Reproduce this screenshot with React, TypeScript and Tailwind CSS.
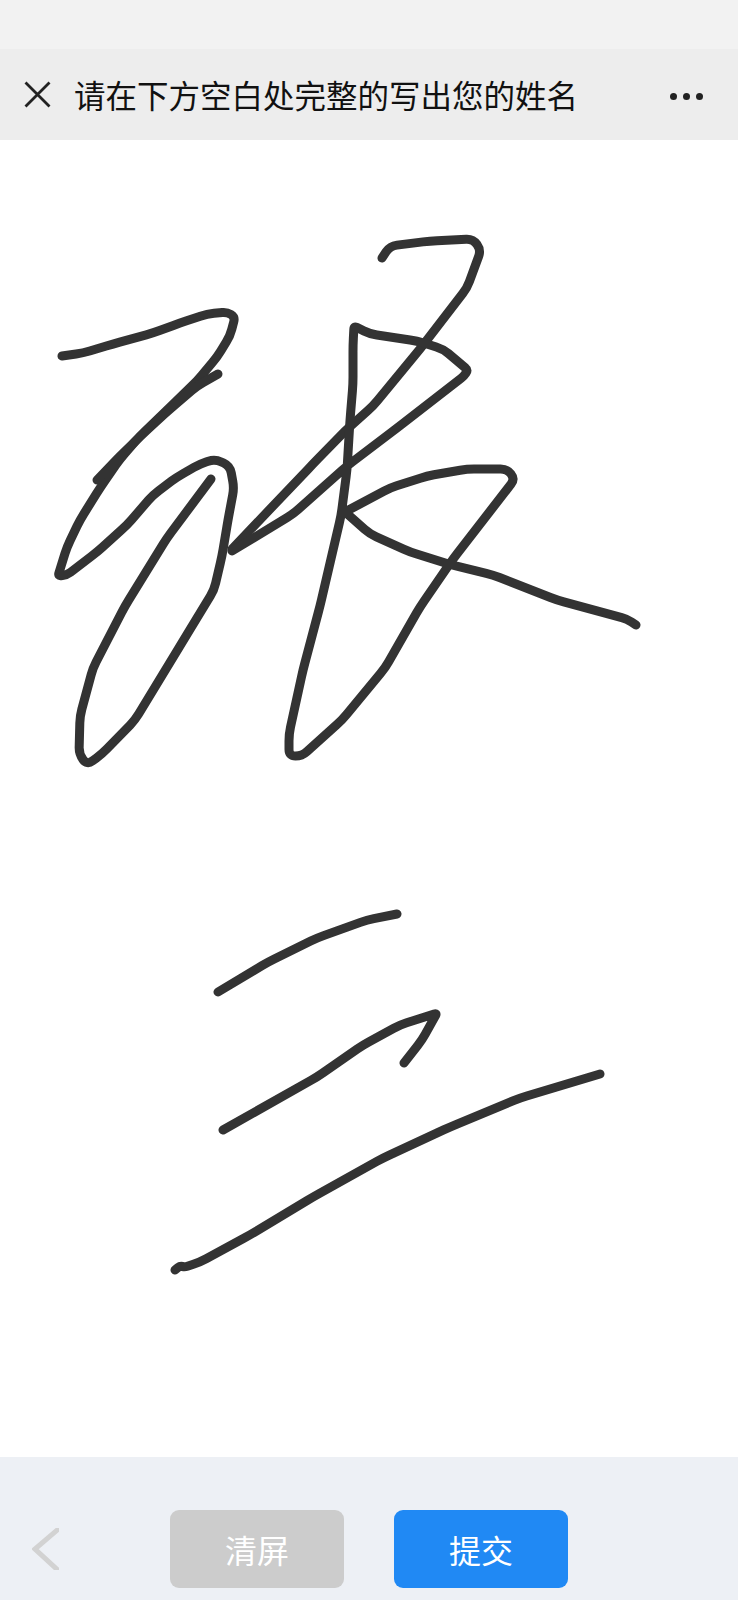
const strokes: number[][][] = [
  [[62,356],[83,353],[113,344],[153,333],[180,323],[207,314],[227,312],[235,317],[230,336],[217,357],[197,381],[170,407],[140,436],[120,459],[100,488],[80,520],[67,547],[58,576],[67,575],[97,552],[127,525],[153,495],[177,477],[200,464],[215,459],[230,466],[234,488],[228,520],[222,556],[214,590],[183,641],[135,720],[102,754],[87,765],[79,754],[80,716],[93,668],[125,606],[167,538],[211,479]],
  [[218,374],[197,386],[170,409],[145,432],[120,456],[97,480]],
  [[232,549],[313,464],[345,431],[373,406],[420,349],[467,288],[481,250],[473,239],[430,241],[390,246],[382,258]],
  [[232,551],[293,514],[347,466],[397,428],[464,376],[468,370],[443,349],[417,341],[370,334],[354,326],[353,345],[353,384],[350,420],[347,470],[341,516],[320,606],[303,670],[289,734],[289,756],[302,756],[342,720],[385,668],[420,607],[453,559],[515,479],[507,469],[467,469],[427,476],[390,488],[345,512],[370,534],[410,552],[452,565],[493,575],[557,600],[627,619],[636,625]],
  [[218,992],[268,962],[317,938],[367,920],[397,914]],
  [[223,1130],[317,1077],[363,1045],[400,1025],[437,1013],[422,1040],[404,1063]],
  [[175,1270],[180,1266],[185,1267],[200,1262],[250,1235],[313,1197],[383,1158],[450,1127],[520,1098],[600,1074]],
];

function rounded(pts: number[][]) {
  let d = `M${pts[0][0]} ${pts[0][1]}`;
  for (let i = 1; i < pts.length - 1; i++) {
    const [px, py] = pts[i - 1];
    const [x, y] = pts[i];
    const [nx, ny] = pts[i + 1];
    const a = Math.hypot(x - px, y - py);
    const b = Math.hypot(nx - x, ny - y);
    const cos = ((x - px) * (nx - x) + (y - py) * (ny - y)) / (a * b);
    const r = Math.min(cos < -0.2 ? 3 : 7, a / 2, b / 2);
    const sx = x - ((x - px) / a) * r;
    const sy = y - ((y - py) / a) * r;
    const ex = x + ((nx - x) / b) * r;
    const ey = y + ((ny - y) / b) * r;
    d += ` L${sx} ${sy} Q${x} ${y} ${ex} ${ey}`;
  }
  const last = pts[pts.length - 1];
  return `${d} L${last[0]} ${last[1]}`;
}

export default function App() {
  return (
    <div className="flex h-[1600px] w-[738px] flex-col overflow-hidden bg-white font-['Noto_Sans_CJK_SC',sans-serif]">
      <div className="h-[49px] w-full bg-[#f2f2f2]" />
      <header className="flex h-[91px] items-center bg-[#ededed] pl-[24px] pr-[35px]">
        <svg width="27" height="27" viewBox="0 0 27 27" className="shrink-0">
          <path d="M1.5 1.5 L25.5 25.5 M25.5 1.5 L1.5 25.5" stroke="#222" strokeWidth="2.8" fill="none" />
        </svg>
        <h1 className="ml-[23px] flex-1 whitespace-nowrap text-[31.5px] font-normal leading-none text-[#111]">
          请在下方空白处完整的写出您的姓名
        </h1>
        <div className="mt-[4px] flex items-center gap-[6px]">
          <span className="h-[7px] w-[7px] rounded-full bg-[#222]" />
          <span className="h-[7px] w-[7px] rounded-full bg-[#222]" />
          <span className="h-[7px] w-[7px] rounded-full bg-[#222]" />
        </div>
      </header>
      <main className="flex-1 bg-white">
        <svg className="block h-full w-full" viewBox="0 140 738 1317">
          {strokes.map((pts, i) => (
            <path key={i} d={rounded(pts)} fill="none" stroke="#333" strokeWidth="9" strokeLinecap="round" strokeLinejoin="round" />
          ))}
        </svg>
      </main>
      <footer className="flex h-[143px] items-start bg-[#edf0f5] pl-[32px] pt-[53px]">
        <svg width="27" height="42" viewBox="0 0 27 42" className="mt-[18px] shrink-0">
          <path d="M30 -2 L3 21 L30 46" fill="none" stroke="#d2d2d2" strokeWidth="5" />
        </svg>
        <button className="ml-[111px] flex h-[78px] w-[174px] items-center justify-center rounded-[9px] bg-[#cccccc] text-[32px] text-white">
          清屏
        </button>
        <button className="ml-[50px] flex h-[78px] w-[174px] items-center justify-center rounded-[9px] bg-[#2089f4] text-[32px] text-white">
          提交
        </button>
      </footer>
    </div>
  );
}
